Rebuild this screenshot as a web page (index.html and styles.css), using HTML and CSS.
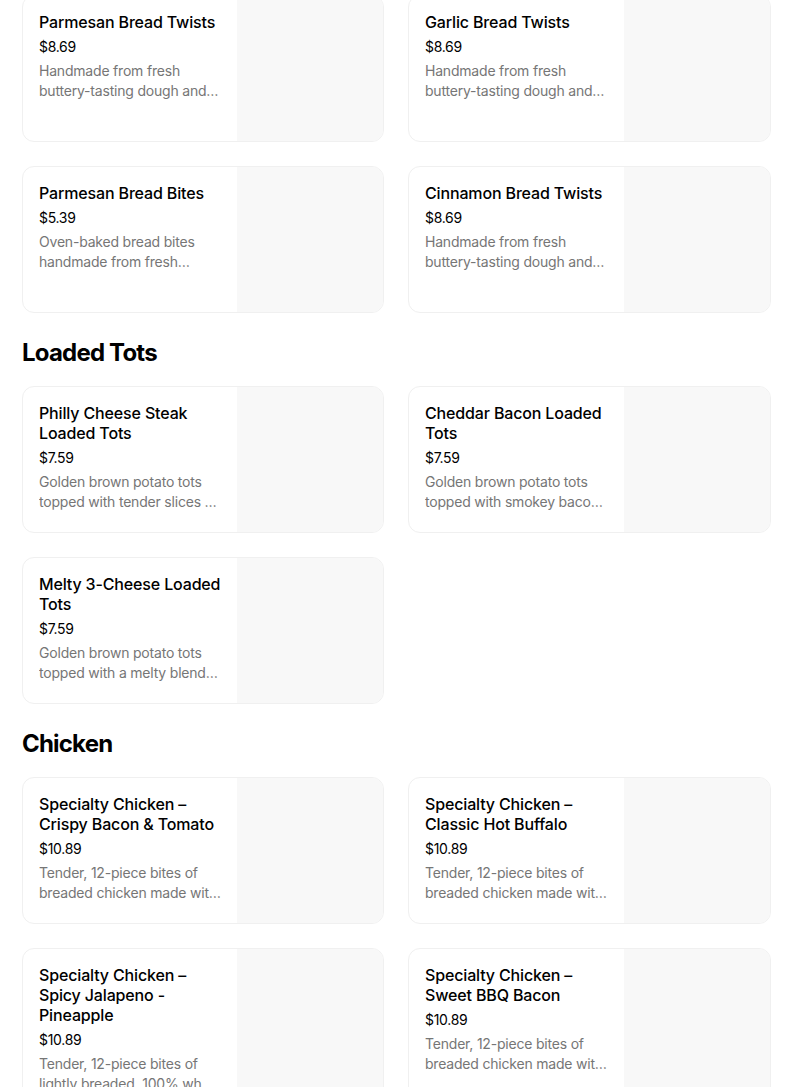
FILE: index.html
```html
<!DOCTYPE html>
<html>
<head>
<meta charset="utf-8">
<link rel="stylesheet" href="styles.css">
</head>
<body>
<div class="page">
  <div class="grid first">
    <div class="card"><div class="info"><div class="title">Parmesan Bread Twists</div><div class="price">$8.69</div><div class="desc">Handmade from fresh buttery-tasting dough and baked to a golden brown.</div></div><div class="img"></div></div>
    <div class="card"><div class="info"><div class="title">Garlic Bread Twists</div><div class="price">$8.69</div><div class="desc">Handmade from fresh buttery-tasting dough and baked to a golden brown.</div></div><div class="img"></div></div>
    <div class="card"><div class="info"><div class="title">Parmesan Bread Bites</div><div class="price">$5.39</div><div class="desc">Oven-baked bread bites handmade from fresh buttery-tasting dough.</div></div><div class="img"></div></div>
    <div class="card"><div class="info"><div class="title">Cinnamon Bread Twists</div><div class="price">$8.69</div><div class="desc">Handmade from fresh buttery-tasting dough and baked to a golden brown.</div></div><div class="img"></div></div>
  </div>
  <h2 class="section">Loaded Tots</h2>
  <div class="grid">
    <div class="card"><div class="info"><div class="title">Philly Cheese Steak Loaded Tots</div><div class="price">$7.59</div><div class="desc">Golden brown potato tots topped with tender slices of steak and cheese.</div></div><div class="img"></div></div>
    <div class="card"><div class="info"><div class="title">Cheddar Bacon Loaded Tots</div><div class="price">$7.59</div><div class="desc">Golden brown potato tots topped with smokey bacon, cheddar and more.</div></div><div class="img"></div></div>
    <div class="card"><div class="info"><div class="title">Melty 3-Cheese Loaded Tots</div><div class="price">$7.59</div><div class="desc">Golden brown potato tots topped with a melty blend of three cheeses.</div></div><div class="img"></div></div>
  </div>
  <h2 class="section">Chicken</h2>
  <div class="grid">
    <div class="card"><div class="info"><div class="title">Specialty Chicken – Crispy Bacon &amp; Tomato</div><div class="price">$10.89</div><div class="desc">Tender, 12-piece bites of breaded chicken made with 100% whole breast.</div></div><div class="img"></div></div>
    <div class="card"><div class="info"><div class="title">Specialty Chicken – Classic Hot Buffalo</div><div class="price">$10.89</div><div class="desc">Tender, 12-piece bites of breaded chicken made with 100% whole breast.</div></div><div class="img"></div></div>
    <div class="card"><div class="info"><div class="title">Specialty Chicken – Spicy Jalapeno - Pineapple</div><div class="price">$10.89</div><div class="desc">Tender, 12-piece bites of lightly breaded, 100% whole breast white meat.</div></div><div class="img"></div></div>
    <div class="card"><div class="info"><div class="title">Specialty Chicken – Sweet BBQ Bacon</div><div class="price">$10.89</div><div class="desc">Tender, 12-piece bites of breaded chicken made with 100% whole breast.</div></div><div class="img"></div></div>
  </div>
</div>
</body>
</html>
```
FILE: styles.css
```css
html, body {
  margin: 0;
  padding: 0;
  background: #ffffff;
}
body {
  font-family: Inter, "Liberation Sans", sans-serif;
  color: #000000;
  overflow: hidden;
}
.page {
  width: 749px;
  margin-left: 22px;
}
.grid {
  display: grid;
  grid-template-columns: 362px 363px;
  column-gap: 24px;
  row-gap: 24px;
}
.grid.first {
  margin-top: -5px;
}
.card {
  box-sizing: border-box;
  display: flex;
  border: 1px solid #f0f0f0;
  border-radius: 12px;
  overflow: hidden;
  min-height: 147px;
  background: #ffffff;
}
.info {
  flex: 1;
  min-width: 0;
  padding: 16px 16px 16px 16px;
}
.title {
  font-size: 16px;
  line-height: 20px;
  font-weight: 500;
  letter-spacing: -0.15px;
}
.price {
  margin-top: 5px;
  font-size: 14px;
  line-height: 20px;
  letter-spacing: -0.3px;
}
.desc {
  margin-top: 4px;
  font-size: 14px;
  line-height: 20px;
  color: #767676;
  letter-spacing: -0.2px;
  display: -webkit-box;
  -webkit-line-clamp: 2;
  -webkit-box-orient: vertical;
  overflow: hidden;
}
.img {
  width: 146px;
  flex: none;
  background: #f8f8f8;
}
.section {
  margin: 24px 0 17px 0;
  font-size: 24px;
  line-height: 32px;
  font-weight: 700;
  letter-spacing: -0.8px;
}
```
